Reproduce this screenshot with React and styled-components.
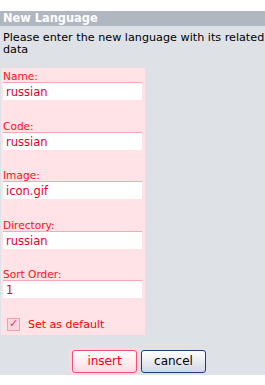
import React, { useState } from "react";
import styled, { createGlobalStyle } from "styled-components";

const GlobalStyle = createGlobalStyle`
  body {
    margin: 0;
    background: #ffffff;
    font-family: "DejaVu Sans", Verdana, sans-serif;
  }
`;

const fields = [
  { label: "Name:", value: "russian" },
  { label: "Code:", value: "russian" },
  { label: "Image:", value: "icon.gif" },
  { label: "Directory:", value: "russian" },
  { label: "Sort Order:", value: "1" },
];

const App = () => {
  const [isDefault, setIsDefault] = useState(true);

  return (
    <Page>
      <GlobalStyle />
      <TitleBar>New Language</TitleBar>
      <Body>
        <Intro>Please enter the new language with its related data</Intro>
        <FormPanel>
          {fields.map((f) => (
            <FieldGroup key={f.label}>
              <Label>{f.label}</Label>
              <TextInput defaultValue={f.value} />
            </FieldGroup>
          ))}
          <CheckRow>
            <CheckBox
              type="checkbox"
              checked={isDefault}
              onChange={() => setIsDefault(!isDefault)}
            />
            Set as default
          </CheckRow>
        </FormPanel>
        <ButtonRow>
          <InsertButton>insert</InsertButton>
          <CancelButton>cancel</CancelButton>
        </ButtonRow>
      </Body>
    </Page>
  );
};

const Page = styled.div`
  width: 265px;
  padding-top: 11px;
`;

const TitleBar = styled.div`
  height: 15px;
  line-height: 15px;
  background: #b1b7c1;
  color: #ffffff;
  font-weight: bold;
  font-size: 11.4px;
  padding-left: 3px;
`;

const Body = styled.div`
  background: #dee2e7;
  padding: 3px 0 2px 0;
`;

const Intro = styled.div`
  font-size: 11.2px;
  line-height: 12px;
  color: #000000;
  padding: 3px 0 0 3px;
`;

const FormPanel = styled.div`
  margin: 12px 0 0 1px;
  width: 144px;
  background: #ffe3e6;
  padding: 2px 0 3px 0;
`;

const FieldGroup = styled.div`
  padding: 0 3px 0 2px;
  margin-bottom: 19.5px;
`;

const Label = styled.div`
  font-size: 10.6px;
  line-height: 12px;
  color: #ff1020;
`;

const TextInput = styled.input`
  display: block;
  box-sizing: border-box;
  width: 139px;
  height: 18px;
  margin: 0;
  border: none;
  border-top: 1px solid #f7a9b6;
  background: #ffffff;
  color: #e8002a;
  font-family: "DejaVu Sans", Verdana, sans-serif;
  font-size: 11.5px;
  padding: 1px 3px 0 3px;
  outline: none;
`;

const CheckRow = styled.label`
  display: flex;
  align-items: center;
  gap: 8px;
  padding-left: 6px;
  height: 14px;
  font-size: 11px;
  color: #ff0000;
`;

const CheckBox = styled.input`
  appearance: none;
  width: 13px;
  height: 13px;
  margin: 0;
  border: 1px solid #f2a0ae;
  background: #ffd6dd;
  position: relative;
  &:checked::after {
    content: "✓";
    position: absolute;
    left: 1px;
    top: -2px;
    font-size: 11px;
    color: #e8308a;
  }
`;

const ButtonRow = styled.div`
  display: flex;
  gap: 4px;
  padding: 15px 0 0 72px;
  height: 23px;
`;

const BaseButton = styled.button`
  box-sizing: border-box;
  width: 65px;
  height: 23px;
  border-radius: 3px;
  font-family: "DejaVu Sans", Verdana, sans-serif;
  font-size: 12px;
  padding: 0;
`;

const InsertButton = styled(BaseButton)`
  border: 1px solid #f0507a;
  background: linear-gradient(#ffffff, #ffdbe3);
  color: #ff0000;
  box-shadow: 0 0 0 3px #fbd9df;
`;

const CancelButton = styled(BaseButton)`
  border: 1px solid #1e3f74;
  background: linear-gradient(#ffffff, #d3d7e3);
  color: #000000;
`;

export default App;
